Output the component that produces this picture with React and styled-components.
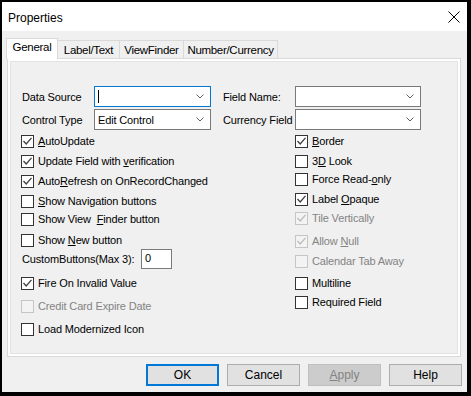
import React from "react";
import styled, { createGlobalStyle } from "styled-components";

const GlobalStyle = createGlobalStyle`
	body {
		margin: 0;
		background: #000;
		font-family: "Liberation Sans", Arial, sans-serif;
	}
`;

const Window = styled.div`
	width: 471px;
	height: 396px;
	box-sizing: border-box;
	border-style: solid;
	border-color: #000;
	border-width: 2px 4px 4px 2px;
	display: flex;
	flex-direction: column;
	background: #f0f0f0;
`;

const TitleBar = styled.div`
	height: 29px;
	flex-shrink: 0;
	display: flex;
	align-items: center;
	justify-content: space-between;
	background: #fff;
	padding: 0 7px 0 6px;
`;

const Title = styled.span`
	font-size: 12px;
	color: #000;
	margin-top: 2px;
`;

const Body = styled.div`
	flex: 1;
	display: flex;
	flex-direction: column;
	padding: 7px 5px 0 4px;
`;

const TabStrip = styled.div`
	display: flex;
	align-items: flex-end;
	height: 21px;
	position: relative;
	z-index: 1;
	margin-bottom: -1px;
`;

const Tab = styled.div`
	box-sizing: border-box;
	width: ${(p) => p.$w}px;
	height: ${(p) => (p.$active ? 21 : 19)}px;
	margin-left: ${(p) => (p.$first ? 0 : -1)}px;
	border: 1px solid #d9d9d9;
	border-bottom: ${(p) => (p.$active ? "none" : "1px solid #d9d9d9")};
	background: ${(p) => (p.$active ? "#fff" : "#f0f0f0")};
	font-size: 11.5px;
	letter-spacing: -0.3px;
	color: #000;
	display: flex;
	justify-content: center;
	align-items: ${(p) => (p.$active ? "flex-start" : "center")};
	padding-top: ${(p) => (p.$active ? 2 : 0)}px;
`;

const Panel = styled.div`
	box-sizing: border-box;
	margin-left: 1px;
	width: 454px;
	height: 299px;
	border: 1px solid #d9d9d9;
	background: #fff;
	padding: 2px;
`;

const Page = styled.div`
	box-sizing: border-box;
	height: 100%;
	background: #f0f0f0;
	border: 1px solid #e3e3e3;
	padding: 24px 0 0 10px;
	display: flex;
	font-size: 11px;
	letter-spacing: -0.15px;
	color: #000;
`;

const Column = styled.div`
	display: flex;
	flex-direction: column;
	width: ${(p) => p.$w}px;
`;

const FieldRow = styled.div`
	display: flex;
	align-items: center;
	height: 21px;
	margin-top: ${(p) => p.$mt || 0}px;
`;

const FieldLabel = styled.span`
	width: 72px;
	padding-left: 1px;
	white-space: nowrap;
`;

const Combo = styled.div`
	box-sizing: border-box;
	width: ${(p) => p.$w}px;
	height: 21px;
	background: #fff;
	border: 1px solid ${(p) => (p.$focus ? "#0078d7" : "#7a7a7a")};
	display: flex;
	align-items: center;
	justify-content: space-between;
	padding: 0 6px 0 3px;
`;

const Caret = styled.span`
	width: 1px;
	height: 13px;
	background: #000;
`;

const CheckRow = styled.div`
	display: flex;
	align-items: center;
	height: 16px;
	margin-top: ${(p) => p.$mt}px;
	padding-left: ${(p) => p.$indent || 0}px;
	color: ${(p) => (p.$disabled ? "#838383" : "#000")};
	white-space: pre;
`;

const Box = styled.span`
	box-sizing: border-box;
	width: 13px;
	height: 13px;
	flex-shrink: 0;
	margin-right: 4px;
	border: 1px solid ${(p) => (p.$disabled ? "#c5c5c5" : "#333")};
	background: ${(p) => (p.$disabled ? "#f3f3f3" : "#fff")};
	display: flex;
`;

const Key = styled.u`
	text-underline-offset: 1px;
`;

const SpinRow = styled.div`
	display: flex;
	align-items: center;
	height: 20px;
	margin-top: 1px;
	padding-left: 1px;
`;

const SpinLabel = styled.span`
	width: 119px;
	white-space: nowrap;
`;

const SmallInput = styled.div`
	box-sizing: border-box;
	width: 31px;
	height: 20px;
	background: #fff;
	border: 1px solid #7a7a7a;
	padding: 2px 0 0 3px;
`;

const Footer = styled.div`
	display: flex;
	justify-content: flex-end;
	gap: 8px;
	margin-top: 7px;
`;

const Button = styled.div`
	box-sizing: border-box;
	width: 73px;
	height: 22px;
	display: flex;
	align-items: center;
	justify-content: center;
	font-size: 12px;
	background: ${(p) => (p.$disabled ? "#cccccc" : "#e1e1e1")};
	color: ${(p) => (p.$disabled ? "#838383" : "#000")};
	border: ${(p) =>
		p.$default ? "2px solid #0078d7" : p.$disabled ? "1px solid #bfbfbf" : "1px solid #adadad"};
`;

const Chevron = () => (
	<svg width="8" height="5" viewBox="0 0 8 5">
		<path d="M0.5 0.5 L4 4 L7.5 0.5" fill="none" stroke="#606060" strokeWidth="1" />
	</svg>
);

const CloseIcon = () => (
	<svg width="12" height="12" viewBox="0 0 12 12">
		<path d="M0.5 0.5 L11.5 11.5 M11.5 0.5 L0.5 11.5" stroke="#000" strokeWidth="1" />
	</svg>
);

const Check = ({ checked, disabled, children, mt, indent }) => (
	<CheckRow $mt={mt} $indent={indent} $disabled={disabled}>
		<Box $disabled={disabled}>
			{checked && (
				<svg width="11" height="11" viewBox="0 0 11 11">
					<path
						d="M1.5 5 L4.2 8 L9.5 1.8"
						fill="none"
						stroke={disabled ? "#bcbcbc" : "#404040"}
						strokeWidth="1.3"
					/>
				</svg>
			)}
		</Box>
		<span>{children}</span>
	</CheckRow>
);

const tabs = [
	{ name: "General", w: 52 },
	{ name: "Label/Text", w: 63 },
	{ name: "ViewFinder", w: 65 },
	{ name: "Number/Currency", w: 95 },
];

export default function App() {
	return (
		<>
			<GlobalStyle />
			<Window>
				<TitleBar>
					<Title>Properties</Title>
					<CloseIcon />
				</TitleBar>
				<Body>
					<TabStrip>
						{tabs.map((t, i) => (
							<Tab key={t.name} $w={t.w} $active={i === 0} $first={i === 0}>
								{t.name}
							</Tab>
						))}
					</TabStrip>
					<Panel>
						<Page>
							{/* left side of the form */}
							<Column $w={201}>
								<FieldRow>
									<FieldLabel>Data Source</FieldLabel>
									<Combo $w={117} $focus>
										<Caret />
										<Chevron />
									</Combo>
								</FieldRow>
								<FieldRow $mt={2}>
									<FieldLabel>Control Type</FieldLabel>
									<Combo $w={117}>
										<span>Edit Control</span>
										<Chevron />
									</Combo>
								</FieldRow>
								<Check checked mt={3}>
									<Key>A</Key>utoUpdate
								</Check>
								<Check checked mt={4}>
									Update Field with <Key>v</Key>erification
								</Check>
								<Check checked mt={4}>
									Auto<Key>R</Key>efresh on OnRecordChanged
								</Check>
								<Check mt={4}>
									<Key>S</Key>how Navigation buttons
								</Check>
								<Check mt={2}>
									Show View  <Key>F</Key>inder button
								</Check>
								<Check mt={5}>
									Show <Key>N</Key>ew button
								</Check>
								<SpinRow>
									<SpinLabel>CustomButtons(Max 3):</SpinLabel>
									<SmallInput>0</SmallInput>
								</SpinRow>
								<Check checked mt={6}>
									Fire On Invalid Value
								</Check>
								<Check disabled mt={7}>
									Credit Card Expire Date
								</Check>
								<Check mt={7}>Load Modernized Icon</Check>
							</Column>
							{/* right side of the form */}
							<Column $w={210}>
								<FieldRow>
									<FieldLabel>Field Name:</FieldLabel>
									<Combo $w={126}>
										<span />
										<Chevron />
									</Combo>
								</FieldRow>
								<FieldRow $mt={2}>
									<FieldLabel>Currency Field</FieldLabel>
									<Combo $w={126}>
										<span />
										<Chevron />
									</Combo>
								</FieldRow>
								<Check checked mt={3} indent={73}>
									<Key>B</Key>order
								</Check>
								<Check mt={4} indent={73}>
									3<Key>D</Key> Look
								</Check>
								<Check mt={2} indent={73}>
									Force Read-<Key>o</Key>nly
								</Check>
								<Check checked mt={4} indent={73}>
									Label <Key>O</Key>paque
								</Check>
								<Check checked disabled mt={3} indent={73}>
									Tile Vertically
								</Check>
								<Check checked disabled mt={7} indent={73}>
									Allow <Key>N</Key>ull
								</Check>
								<Check disabled mt={4} indent={73}>
									Calendar Tab Away
								</Check>
								<Check mt={6} indent={73}>
									Multiline
								</Check>
								<Check mt={3} indent={73}>
									Required Field
								</Check>
							</Column>
						</Page>
					</Panel>
					<Footer>
						<Button $default>OK</Button>
						<Button>Cancel</Button>
						<Button $disabled>
							<Key>A</Key>pply
						</Button>
						<Button>Help</Button>
					</Footer>
				</Body>
			</Window>
		</>
	);
}
